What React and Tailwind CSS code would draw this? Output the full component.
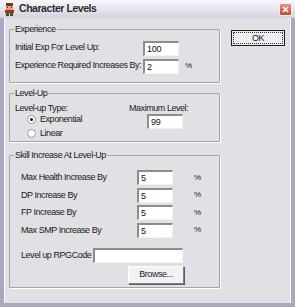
const font = { fontFamily: '"Liberation Sans", Arial, sans-serif' };

function TextBox({ value, className = "" }) {
  return (
    <div
      className={`h-[15px] bg-white border-t-2 border-l-2 border-b border-r border-t-[#8d8d8d] border-l-[#8d8d8d] border-b-[#f2f2f2] border-r-[#f2f2f2] pl-[2px] text-[9px] leading-[12px] tracking-[-0.2px] text-[#111] ${className}`}
    >
      {value}
    </div>
  );
}

function Radio({ checked, label }) {
  return (
    <div className="flex items-center gap-[4px] h-[13px]">
      <span className="w-[9px] h-[9px] rounded-full bg-white border border-[#9a9aa0] flex items-center justify-center">
        {checked && <span className="w-[3px] h-[3px] rounded-full bg-[#111]" />}
      </span>
      <span>{label}</span>
    </div>
  );
}

function Group({ title, className = "", children }) {
  return (
    <fieldset
      className={`border border-[#a4a3a9] shadow-[1px_1px_0_#ffffff] rounded-[1px] px-0 pb-0 ${className}`}
    >
      <legend className="ml-[4px] px-[1px] leading-[11px]">{title}</legend>
      {children}
    </fieldset>
  );
}

function SkillRow({ label, value }) {
  return (
    <div className="flex items-center h-[17.5px]">
      <span className="w-[127px] pl-[11px] whitespace-nowrap">{label}</span>
      <TextBox value={value} className="w-[36px]" />
      <span className="ml-[21px] text-[8px]">%</span>
    </div>
  );
}

export default function App() {
  return (
    <div
      className="w-[295px] h-[307px] flex flex-col bg-[#a9a8c0] text-[9px] tracking-[-0.45px] text-[#1a1a1a]"
      style={font}
    >
      {/* Title bar */}
      <div className="h-[18px] flex items-center justify-between pl-[3px] pr-[3px] bg-gradient-to-b from-[#f7f7fb] via-[#e6e6ee] to-[#d2d2de]">
        <div className="flex items-center gap-[3px]">
          <svg width="13" height="13" viewBox="0 0 13 13">
            <rect x="3" y="0" width="7" height="3" fill="#6b3a1a" />
            <rect x="3" y="3" width="7" height="4" fill="#e2a36c" />
            <rect x="4" y="4" width="1" height="1" fill="#222" />
            <rect x="8" y="4" width="1" height="1" fill="#222" />
            <rect x="2" y="7" width="9" height="3" fill="#b3271f" />
            <rect x="3" y="10" width="3" height="3" fill="#2b5a2b" />
            <rect x="7" y="10" width="3" height="3" fill="#2b5a2b" />
          </svg>
          <span className="font-bold text-[10.5px] text-[#2a2a2a] tracking-[-0.45px]">
            Character Levels
          </span>
        </div>
        <div className="w-[13px] h-[13px] rounded-[2px] bg-gradient-to-b from-[#e8927c] to-[#c6442c] border border-[#f4f0f0] flex items-center justify-center">
          <svg width="7" height="7" viewBox="0 0 7 7">
            <path d="M1 1 L6 6 M6 1 L1 6" stroke="#ffffff" strokeWidth="1.6" />
          </svg>
        </div>
      </div>

      {/* Body */}
      <div className="flex-1 mb-[4px] ml-[4px] mr-[4px] bg-[#e1e0e5] border-l border-r border-[#f6f6f6] flex">
        <div className="w-[215px] flex flex-col pl-[4px] pt-[6px]">
          <Group title="Experience" className="w-[211px] h-[59px]">
            <div className="flex flex-col gap-[2px] pt-[5px]">
              <div className="flex items-center h-[16px]">
                <span className="w-[133px] pl-[5px] whitespace-nowrap">Initial Exp For Level Up:</span>
                <TextBox value="100" className="w-[36px]" />
              </div>
              <div className="flex items-center h-[16px]">
                <span className="w-[133px] pl-[5px] whitespace-nowrap">Experience Required Increases By:</span>
                <TextBox value="2" className="w-[36px]" />
                <span className="ml-[6px] text-[8px]">%</span>
              </div>
            </div>
          </Group>

          <Group title="Level-Up" className="w-[211px] h-[54px] mt-[5px]">
            <div className="flex pt-[4px]">
              <div className="w-[120px] pl-[5px] flex flex-col">
                <span className="h-[10px] leading-[10px]">Level-up Type:</span>
                <div className="pl-[12px] flex flex-col gap-[1px]">
                  <Radio checked label="Exponential" />
                  <Radio label="Linear" />
                </div>
              </div>
              <div className="flex flex-col">
                <span className="h-[10px] leading-[10px] ml-[-1px]">Maximum Level:</span>
                <TextBox value="99" className="w-[36px] mt-[1px] ml-[17px]" />
              </div>
            </div>
          </Group>

          <Group title="Skill Increase At Level-Up" className="w-[211px] h-[138px] mt-[8px]">
            <div className="flex flex-col pt-[8px]">
              <SkillRow label="Max Health Increase By" value="5" />
              <SkillRow label="DP Increase By" value="5" />
              <SkillRow label="FP Increase By" value="5" />
              <SkillRow label="Max SMP Increase By" value="5" />
              <div className="flex items-center h-[15px] mt-[9px]">
                <span className="w-[83px] pl-[11px] whitespace-nowrap">Level up RPGCode</span>
                <TextBox value="" className="w-[90px]" />
              </div>
              <div className="flex justify-start pl-[118px] mt-[3px]">
                <button className="w-[56px] h-[18px] bg-[#f2f1f4] border border-[#ffffff] border-b-[#7e7e86] border-r-[#7e7e86] shadow-[1px_1px_0_#5c5c64] text-[9px]">
                  Browse...
                </button>
              </div>
            </div>
          </Group>
        </div>

        <div className="pl-[11px] pt-[12px]">
          <button className="w-[54px] h-[16px] border border-[#1c1c1c] bg-[#eeedf1] p-[1px]">
            <div className="w-full h-full border border-dotted border-[#333] flex items-center justify-center text-[9px] leading-[10px]">
              OK
            </div>
          </button>
        </div>
      </div>
    </div>
  );
}
